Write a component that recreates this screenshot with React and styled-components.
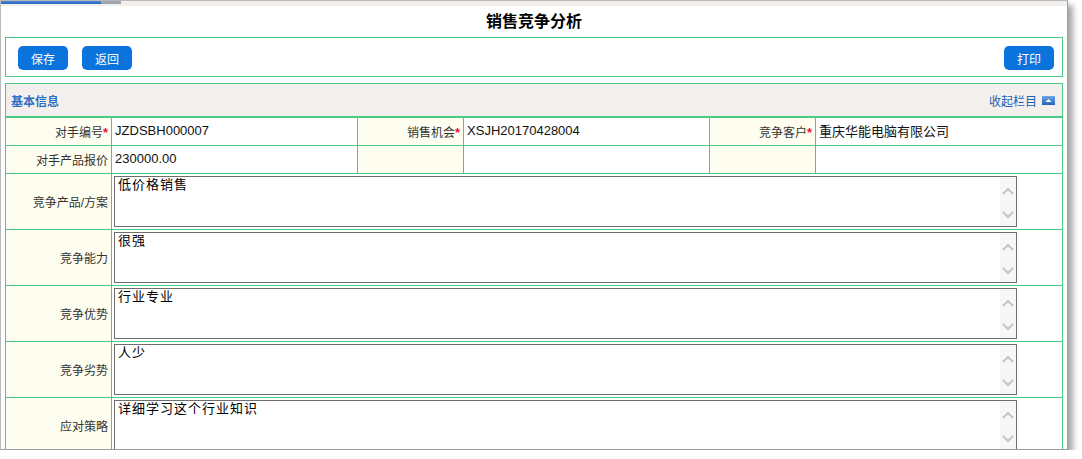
import React from "react";
import styled, { createGlobalStyle } from "styled-components";

const GREEN = "#4cc982";

const GlobalStyle = createGlobalStyle`
  html, body {
    margin: 0;
    padding: 0;
    background: #ffffff;
  }
  body {
    font-family: "Liberation Sans", "Noto Sans CJK SC", sans-serif;
    font-size: 12px;
    color: #333;
  }
`;

const Window = styled.div`
  width: 1066px;
  height: 448px;
  border-top: 1px solid #b9b9b9;
  border-left: 1px solid #b9b9b9;
  border-right: 1px solid #9c9c9c;
  border-bottom: 1px solid #9c9c9c;
  box-shadow: 5px 5px 6px rgba(0, 0, 0, 0.35);
  overflow: hidden;
  background: #fff;
`;

const Strip = styled.div`
  height: 5px;
  background: #f2efec;
  display: flex;
  align-items: flex-start;
`;

const Progress = styled.div`
  height: 3px;
  width: ${p => p.$w}px;
  background: ${p => p.$color};
`;

const Title = styled.h1`
  margin: 0;
  height: 31px;
  line-height: 31px;
  text-align: center;
  font-size: 16px;
  font-weight: bold;
  color: #000;
`;

const Toolbar = styled.div`
  margin: 0 4px;
  height: 38px;
  border: 1px solid ${GREEN};
  display: flex;
  align-items: center;
  padding: 0 8px 0 12px;
  gap: 14px;
`;

const Spacer = styled.div`
  flex: 1;
`;

const Button = styled.button`
  width: 50px;
  height: 24px;
  border: none;
  border-radius: 5px;
  background: #0b74dc;
  color: #fff;
  font-family: inherit;
  font-size: 12px;
  padding: 0;
  margin-top: 2px;
  cursor: pointer;
`;

const Section = styled.div`
  margin: 6px 4px 0;
  border: 1px solid ${GREEN};
  border-bottom: none;
`;

const SectionHeader = styled.div`
  height: 32px;
  background: #f2efec;
  border-bottom: 2px solid ${GREEN};
  display: flex;
  align-items: center;
  justify-content: space-between;
  padding: 0 7px 0 5px;
`;

const SectionTitle = styled.span`
  font-weight: bold;
  font-size: 12px;
  color: #2d6fc6;
`;

const Collapse = styled.span`
  display: flex;
  align-items: center;
  gap: 5px;
  color: #1d5fb9;
  font-size: 12px;
`;

const Table = styled.table`
  width: 100%;
  border-collapse: collapse;
  table-layout: fixed;
`;

const Row = styled.tr`
  height: ${p => (p.$tall ? 56 : p.$first ? 27 : 28)}px;
`;

const Label = styled.td`
  background: #fefef0;
  border: 1px solid ${GREEN};
  border-top: ${p => (p.$first ? "none" : `1px solid ${GREEN}`)};
  border-left: ${p => (p.$edge ? "none" : `1px solid ${GREEN}`)};
  text-align: right;
  padding: 0 3px 0 0;
  color: #333;
  font-size: 12px;
  vertical-align: middle;
`;

const Value = styled.td`
  border: 1px solid ${GREEN};
  border-top: ${p => (p.$first ? "none" : `1px solid ${GREEN}`)};
  border-right: ${p => (p.$edge ? "none" : `1px solid ${GREEN}`)};
  padding: ${p => (p.$box ? "2px 0 0 2px" : "0 3px 2px")};
  color: #111;
  font-size: 13px;
  vertical-align: ${p => (p.$box ? "top" : "middle")};
`;

const Star = styled.span`
  color: #f0143c;
  font-weight: bold;
  font-size: 13px;
`;

const TextBox = styled.div`
  width: 95%;
  height: 49px;
  border: 1px solid #6e6e6e;
  display: flex;
  background: #fff;
`;

const Area = styled.textarea`
  flex: 1;
  border: none;
  outline: none;
  resize: none;
  overflow: hidden;
  padding: 0 3px;
  margin: 0;
  font-family: "Liberation Sans", "Noto Sans CJK SC", sans-serif;
  font-size: 13px;
  line-height: 16px;
  letter-spacing: 1px;
  color: #000;
  background: transparent;
`;

const Gutter = styled.div`
  width: 16px;
  background: #f7f7f7;
  display: flex;
  flex-direction: column;
  align-items: center;
  justify-content: space-between;
  padding: 10px 0 7px;
`;

const Chevron = ({ up }) => (
  <svg width="12" height="8" viewBox="0 0 12 8">
    <path
      d={up ? "M1 7 L6 2 L11 7" : "M1 1 L6 6 L11 1"}
      fill="none"
      stroke="#c4c4c4"
      strokeWidth="2"
    />
  </svg>
);

const CollapseIcon = () => (
  <svg width="13" height="9" viewBox="0 0 13 9">
    <defs>
      <linearGradient id="cg" x1="0" y1="0" x2="0" y2="1">
        <stop offset="0" stopColor="#6fa6e6" />
        <stop offset="1" stopColor="#2463b8" />
      </linearGradient>
    </defs>
    <rect x="0" y="0" width="13" height="9" fill="url(#cg)" />
    <path d="M3.5 6 L6.5 3 L9.5 6 Z" fill="#fff" />
  </svg>
);

const longFields = [
  { label: "竞争产品/方案", value: "低价格销售" },
  { label: "竞争能力", value: "很强" },
  { label: "竞争优势", value: "行业专业" },
  { label: "竞争劣势", value: "人少" },
  { label: "应对策略", value: "详细学习这个行业知识" },
];

export default function App() {
  return (
    <>
      <GlobalStyle />
      <Window>
        <Strip>
          <Progress $w={100} $color="linear-gradient(#4a88d6, #2a66bf)" />
          <Progress $w={20} $color="#9ea6b2" />
        </Strip>
        <Title>销售竞争分析</Title>
        <Toolbar>
          <Button>保存</Button>
          <Button>返回</Button>
          <Spacer />
          <Button>打印</Button>
        </Toolbar>
        <Section>
          <SectionHeader>
            <SectionTitle>基本信息</SectionTitle>
            <Collapse>
              收起栏目
              <CollapseIcon />
            </Collapse>
          </SectionHeader>
          <Table>
            <colgroup>
              <col style={{ width: "10%" }} />
              <col style={{ width: "23.33%" }} />
              <col style={{ width: "10%" }} />
              <col style={{ width: "23.33%" }} />
              <col style={{ width: "10%" }} />
              <col style={{ width: "23.34%" }} />
            </colgroup>
            <tbody>
              <Row $first>
                <Label $first $edge>
                  对手编号<Star>*</Star>
                </Label>
                <Value $first>JZDSBH000007</Value>
                <Label $first>
                  销售机会<Star>*</Star>
                </Label>
                <Value $first>XSJH20170428004</Value>
                <Label $first>
                  竞争客户<Star>*</Star>
                </Label>
                <Value $first $edge>重庆华能电脑有限公司</Value>
              </Row>
              <Row>
                <Label $edge>对手产品报价</Label>
                <Value>230000.00</Value>
                <Label />
                <Value />
                <Label />
                <Value $edge />
              </Row>
              {longFields.map(f => (
                <Row $tall key={f.label}>
                  <Label $edge>{f.label}</Label>
                  <Value colSpan={5} $edge $box>
                    <TextBox>
                      <Area defaultValue={f.value} />
                      <Gutter>
                        <Chevron up />
                        <Chevron />
                      </Gutter>
                    </TextBox>
                  </Value>
                </Row>
              ))}
            </tbody>
          </Table>
        </Section>
      </Window>
    </>
  );
}
